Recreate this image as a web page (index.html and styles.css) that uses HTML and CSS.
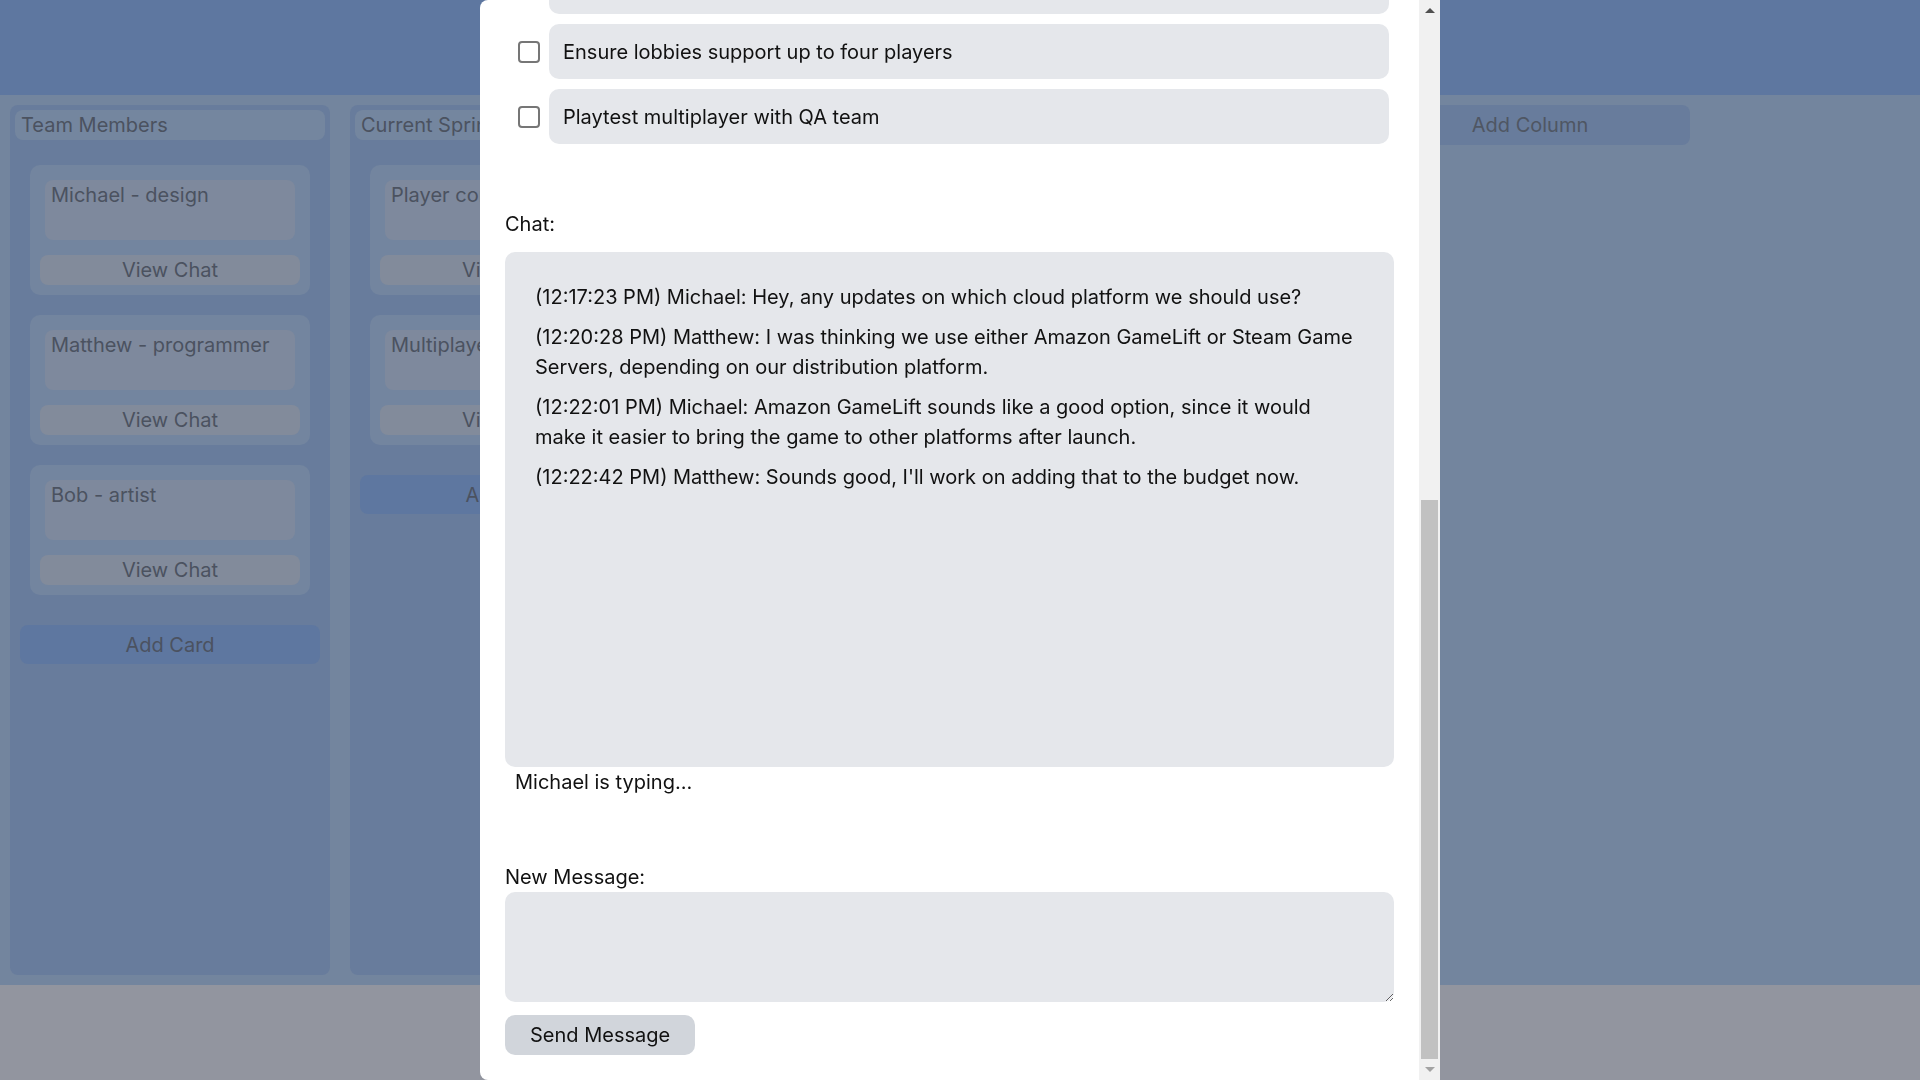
FILE: index.html
```html
<!DOCTYPE html>
<html lang="en">
<head>
<meta charset="utf-8">
<title>Game Dev Board</title>
<link rel="stylesheet" href="styles.css">
</head>
<body>
<header class="topbar"></header>
<main class="board">
  <section class="column">
    <h2 class="column-title">Team Members</h2>
    <div class="cards">
      <div class="card"><div class="card-text">Michael - design</div><button class="card-btn">View Chat</button></div>
      <div class="card"><div class="card-text">Matthew - programmer</div><button class="card-btn">View Chat</button></div>
      <div class="card"><div class="card-text">Bob - artist</div><button class="card-btn">View Chat</button></div>
    </div>
    <button class="add-card">Add Card</button>
  </section>
  <section class="column">
    <h2 class="column-title">Current Sprint</h2>
    <div class="cards">
      <div class="card"><div class="card-text">Player controls</div><button class="card-btn">View Chat</button></div>
      <div class="card"><div class="card-text">Multiplayer support</div><button class="card-btn">View Chat</button></div>
    </div>
    <button class="add-card">Add Card</button>
  </section>
  <section class="column">
    <div class="column-title"></div>
  </section>
  <section class="column">
    <div class="column-title"></div>
  </section>
  <button class="add-column">Add Column</button>
</main>

<div class="overlay">
  <div class="modal">
    <div class="modal-scroll">
      <div class="modal-body">
        <div class="modal-head">
          <div class="modal-title">Multiplayer support</div>
          <button class="close-btn">Close</button>
        </div>
        <label class="field-label">Description:</label>
        <div class="desc">Add online multiplayer so players can team up in co-op lobbies.</div>
        <label class="field-label">Checklist:</label>
        <div class="add-item">
          <div class="add-item-input">New checklist item</div>
          <button class="add-item-btn">Add Item</button>
        </div>
        <ul class="checklist">
          <li class="check-row"><input type="checkbox" class="check-box"><span class="check-text">Choose a networking library</span></li>
          <li class="check-row"><input type="checkbox" class="check-box"><span class="check-text">Set up dedicated game servers</span></li>
          <li class="check-row"><input type="checkbox" class="check-box"><span class="check-text">Implement matchmaking queue</span></li>
          <li class="check-row"><input type="checkbox" class="check-box"><span class="check-text">Design lobby screen</span></li>
          <li class="check-row"><input type="checkbox" class="check-box"><span class="check-text">Sync player movement across clients</span></li>
          <li class="check-row"><input type="checkbox" class="check-box"><span class="check-text">Handle disconnects and reconnects</span></li>
          <li class="check-row"><input type="checkbox" class="check-box"><span class="check-text">Add host migration</span></li>
          <li class="check-row"><input type="checkbox" class="check-box"><span class="check-text">Test latency across regions</span></li>
          <li class="check-row"><input type="checkbox" class="check-box"><span class="check-text">Add in-game text chat</span></li>
          <li class="check-row"><input type="checkbox" class="check-box"><span class="check-text">Ensure lobbies support up to four players</span></li>
          <li class="check-row"><input type="checkbox" class="check-box"><span class="check-text">Playtest multiplayer with QA team</span></li>
        </ul>
        <label class="field-label chat-label">Chat:</label>
        <div class="chat-box">
          <p class="chat-msg">(12:17:23 PM) Michael: Hey, any updates on which cloud platform we should use?</p>
          <p class="chat-msg">(12:20:28 PM) Matthew: I was thinking we use either Amazon GameLift or Steam Game Servers, depending on our distribution platform.</p>
          <p class="chat-msg">(12:22:01 PM) Michael: Amazon GameLift sounds like a good option, since it would make it easier to bring the game to other platforms after launch.</p>
          <p class="chat-msg">(12:22:42 PM) Matthew: Sounds good, I'll work on adding that to the budget now.</p>
        </div>
        <div class="typing">Michael is typing...</div>
        <label class="field-label" for="new-msg">New Message:</label>
        <textarea id="new-msg" class="msg-input"></textarea>
        <button class="send-btn">Send Message</button>
      </div>
    </div>
    <div class="scrollbar" aria-hidden="true">
      <div class="sb-btn"><span class="sb-arrow-up"></span></div>
      <div class="sb-track"><div class="sb-thumb"></div></div>
      <div class="sb-btn"><span class="sb-arrow-down"></span></div>
    </div>
  </div>
</div>
</body>
</html>
```
FILE: styles.css
```css
* {
  box-sizing: border-box;
}

html,
body {
  margin: 0;
  height: 100%;
}

body {
  font-family: Inter, "Noto Sans", sans-serif;
  font-size: 20px;
  line-height: 1.5;
  background: #92959f;
  color: #4b5260;
  overflow: hidden;
}

button,
textarea,
input {
  font: inherit;
  color: inherit;
}

/* ---------- board (dimmed by the open dialog) ---------- */

.topbar {
  height: 95px;
  background: #5e77a0;
}

.board {
  height: 890px;
  background: #73859e;
  padding: 10px;
  display: flex;
  gap: 20px;
  align-items: flex-start;
}

.column {
  flex: 0 0 320px;
  height: 870px;
  background: #687c9c;
  border-radius: 8px;
  padding: 5px;
  display: flex;
  flex-direction: column;
}

.column-title {
  margin: 0;
  font: inherit;
  height: 30px;
  padding: 0 6px;
  background: #74869f;
  border-radius: 8px;
  white-space: nowrap;
  overflow: hidden;
}

.cards {
  display: flex;
  flex-direction: column;
  gap: 20px;
  padding: 25px 15px 0;
}

.card {
  background: #73859f;
  border-radius: 10px;
  padding: 15px 10px 10px;
  display: flex;
  flex-direction: column;
}

.card-text {
  height: 60px;
  margin: 0 5px;
  padding: 0 6px;
  background: #7e899d;
  border-radius: 8px;
  white-space: nowrap;
}

.card-btn {
  margin-top: 15px;
  height: 30px;
  padding: 0;
  border: 0;
  border-radius: 8px;
  background: #828b9b;
}

.add-card {
  margin: 30px 5px 0;
  height: 39px;
  padding: 0;
  border: 0;
  border-radius: 8px;
  background: #5e77a0;
}

.add-column {
  flex: 0 0 320px;
  height: 40px;
  padding: 0;
  border: 0;
  border-radius: 8px;
  background: #687c9c;
  color: #4f5663;
}

/* ---------- dialog ---------- */

.overlay {
  position: fixed;
  inset: 0;
  display: flex;
  justify-content: center;
}

.modal {
  width: 960px;
  height: 100%;
  background: #ffffff;
  border-radius: 8px 0 0 8px;
  overflow: hidden;
  display: flex;
  color: #111111;
}

.modal-scroll {
  flex: 1;
  min-width: 0;
  overflow-y: auto;
  scrollbar-width: none;
  display: flex;
  flex-direction: column-reverse;
}

/* classic scrollbar of the dialog */
.scrollbar {
  flex: 0 0 21px;
  display: flex;
  flex-direction: column;
  background: #f1f1f1;
}

.sb-btn {
  height: 21px;
  flex: none;
  display: flex;
  align-items: center;
  justify-content: center;
}

.sb-arrow-up {
  width: 0;
  height: 0;
  border-left: 5px solid transparent;
  border-right: 5px solid transparent;
  border-bottom: 5px solid #505050;
}

.sb-arrow-down {
  width: 0;
  height: 0;
  border-left: 5px solid transparent;
  border-right: 5px solid transparent;
  border-top: 5px solid #a3a3a3;
}

.sb-track {
  flex: 1;
  display: flex;
  flex-direction: column;
  justify-content: flex-end;
  padding: 0 2px;
}

.sb-thumb {
  height: 559px;
  background: #c1c1c1;
}

.modal-body {
  flex: none;
  padding: 25px;
}

.modal-head {
  display: flex;
  gap: 15px;
  height: 40px;
  margin-bottom: 30px;
}

.modal-title {
  flex: 1;
  font-size: 24px;
  font-weight: 600;
  line-height: 40px;
}

.close-btn,
.add-item-btn,
.send-btn {
  height: 40px;
  padding: 0 25px;
  border: 0;
  border-radius: 10px;
  background: #d1d5db;
  color: #111111;
}

.field-label {
  display: block;
}

.desc {
  height: 110px;
  margin-bottom: 30px;
  padding: 10px 14px;
  background: #e5e7eb;
  border-radius: 10px;
}

.add-item {
  display: flex;
  gap: 15px;
  height: 40px;
  margin-bottom: 29px;
}

.add-item-input {
  flex: 1;
  padding: 5px 14px;
  background: #e5e7eb;
  border-radius: 10px;
  color: #6b7280;
}

.checklist {
  list-style: none;
  margin: 0 0 65px;
  padding: 0;
  display: flex;
  flex-direction: column;
  gap: 10px;
}

.check-row {
  display: flex;
  align-items: center;
  gap: 9px;
  padding: 0 5px 0 13px;
}

.check-box {
  appearance: none;
  flex: none;
  width: 22px;
  height: 22px;
  margin: 0;
  border: 2px solid #767676;
  border-radius: 4px;
  background: #ffffff;
}

.check-text {
  flex: 1;
  padding: 13px 14px 12px;
  background: #e5e7eb;
  border-radius: 10px;
}

.chat-label {
  margin-bottom: 13px;
}

.chat-box {
  height: 515px;
  padding: 30px;
  background: #e5e7eb;
  border-radius: 10px;
  overflow-y: auto;
}

.chat-msg {
  margin: 0 0 10px;
}

.typing {
  padding-left: 10px;
  margin-bottom: 65px;
}

.msg-input {
  display: block;
  width: 100%;
  height: 110px;
  margin: 0 0 13px;
  padding: 10px 14px;
  border: 0;
  border-radius: 10px;
  background: #e5e7eb;
  outline: none;
}

.send-btn {
  display: block;
}
```
